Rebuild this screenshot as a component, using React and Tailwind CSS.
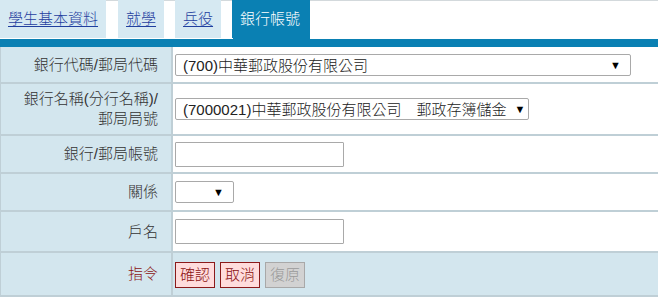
import React from 'react';

const font = { fontFamily: '"Liberation Sans", "Noto Sans CJK TC", sans-serif' };

const tabs = [
  { label: '學生基本資料', active: false },
  { label: '就學', active: false },
  { label: '兵役', active: false },
  { label: '銀行帳號', active: true },
];

// 下拉選單外觀
const Select = ({ value, className }) => (
  <div
    className={`flex items-center justify-between h-[22px] border border-[#a9a9a9] rounded-[2px] bg-white pl-[7px] pr-[9px] text-[15px] leading-none text-[#222] whitespace-nowrap ${className}`}
  >
    <span>{value}</span>
    <span className="text-[11px] text-black ml-2">▼</span>
  </div>
);

const TextInput = () => (
  <div className="w-[169px] h-[25px] border border-[#a9a9a9] rounded-[1px] bg-white" />
);

const Row = ({ label, height, children, cmd }) => (
  <div className={`grid grid-cols-[172px_1fr] border-b-2 border-[#bfcfd6] ${height}`}>
    <div
      className={`flex items-center justify-end text-right pr-[13px] border-r-2 border-[#bfcfd6] bg-[#d3e6ee] text-[15px] leading-[20px] ${cmd ? 'text-[#8b1414]' : 'text-[#333]'}`}
    >
      {label}
    </div>
    <div className={`flex items-center pl-[2px] ${cmd ? 'bg-[#d3e6ee]' : 'bg-white'}`}>{children}</div>
  </div>
);

export default function App() {
  return (
    <div className="w-[658px] h-[297px] overflow-hidden bg-white font-light" style={font}>
      <div className="flex border-t border-[#d3d9dc] h-[37px]">
        {tabs.map((t, i) => (
          <div
            key={t.label}
            className={`-mt-px h-[38px] flex items-center px-[8px] text-[15px] ${i === 0 ? 'mr-[12px]' : 'mr-[11px]'} ${
              t.active ? 'bg-[#0a80b3] text-white pr-[10px]' : 'bg-[#d6e9f2] text-[#1f3f9f] underline underline-offset-2'
            }`}
          >
            {t.label}
          </div>
        ))}
      </div>
      <div className="flex h-[2px]">
        <div className="w-[233px]" />
        <div className="w-[77px] bg-[#0a80b3]" />
      </div>
      <div className="h-[8px] bg-[#0a80b3]" />
      <div className="border-l border-[#bfcfd6]">
        <Row label="銀行代碼/郵局代碼" height="h-[37px]">
          <Select value="(700)中華郵政股份有限公司" className="w-[456px] mt-[1px]" />
        </Row>
        <Row
          label={
            <span>
              銀行名稱(分行名稱)/
              <br />
              郵局局號
            </span>
          }
          height="h-[52px]"
        >
          <Select value="(7000021)中華郵政股份有限公司　郵政存簿儲金" className="w-[354px]" />
        </Row>
        <Row label="銀行/郵局帳號" height="h-[38px]">
          <TextInput />
        </Row>
        <Row label="關係" height="h-[38px]">
          <Select value="" className="w-[59px]" />
        </Row>
        <Row label="戶名" height="h-[41px]">
          <TextInput />
        </Row>
        <Row label="指令" height="h-[44px]" cmd>
          <div className="flex gap-[5px] mt-[1px]">
            <button className="h-[26px] px-[4px] border border-[#8b1a1a] bg-[#ffdcdc] text-[#8b1010] text-[15px] leading-none">確認</button>
            <button className="h-[26px] px-[4px] border border-[#8b1a1a] bg-[#ffdcdc] text-[#8b1010] text-[15px] leading-none">取消</button>
            <button className="h-[26px] px-[4px] border border-[#a8a8a8] bg-[#d2d2d2] text-[#9a9a9a] text-[15px] leading-none">復原</button>
          </div>
        </Row>
      </div>
    </div>
  );
}
